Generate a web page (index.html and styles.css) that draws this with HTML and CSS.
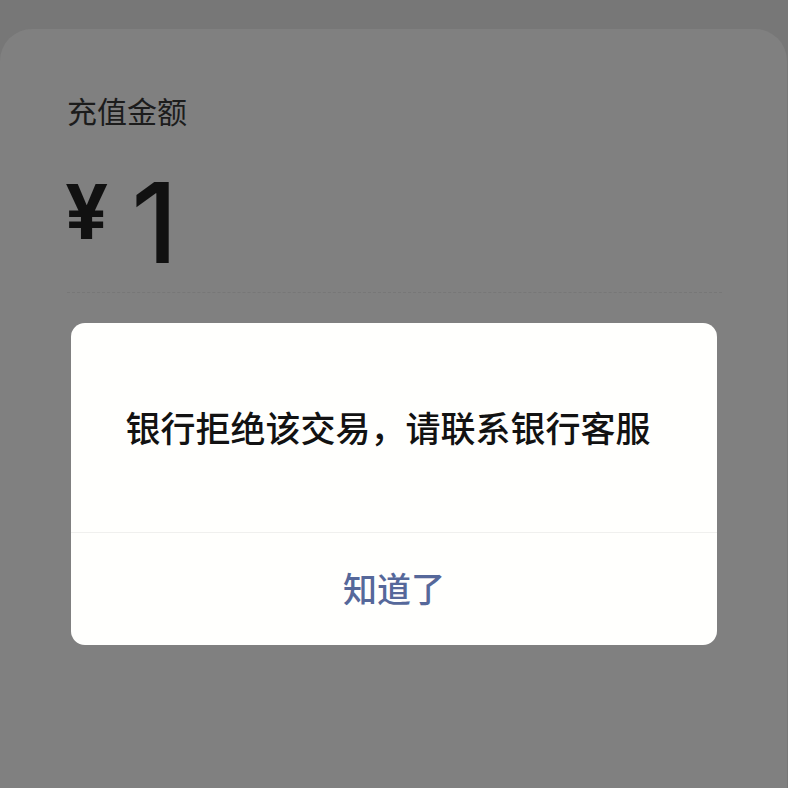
FILE: index.html
```html
<!DOCTYPE html>
<html lang="zh-CN">
<head>
    <meta charset="UTF-8">
    <meta name="viewport" content="width=device-width, initial-scale=1.0">
    <title>充值</title>
    <link rel="stylesheet" href="styles.css">
</head>
<body>

    <div class="page">
        <div class="card">
            <div class="label">充值金额</div>
            <div class="amount">
                <span class="yen">¥</span>
                <span class="num">1</span>
            </div>
            <div class="line"></div>
        </div>
    </div>

    <div class="dialog">
        <div class="dialog-msg">银行拒绝该交易，请联系银行客服</div>
        <div class="dialog-btn">知道了</div>
    </div>

</body>
</html>
```

FILE: styles.css
```css
body {
    margin: 0;
    background-color: #777777;
    font-family: "Noto Sans CJK SC", "Noto Sans", sans-serif;
    height: 788px;
    overflow: hidden;
}
.page {
    padding-top: 29px;
    height: 759px;
}
.card {
    height: 100%;
    margin: 0 1px 0 0;
    background-color: #808080;
    border-top-left-radius: 32px;
    border-top-right-radius: 32px;
    padding: 64px 67px 0 67px;
    box-sizing: border-box;
}
.label {
    font-size: 30px;
    line-height: 34px;
    color: #1c1c1c;
}
.amount {
    display: flex;
    align-items: flex-start;
    margin-top: 48px;
    height: 105px;
    font-family: Inter, "Liberation Sans", sans-serif;
    color: #111111;
}
.yen {
    font-size: 76px;
    font-weight: 700;
    line-height: 1;
    margin-top: -2px;
    margin-left: -2px;
}
.num {
    font-size: 112px;
    font-weight: 500;
    line-height: 1;
    margin-left: 23px;
    margin-top: -9px;
}
.line {
    margin-top: 12px;
    border-top: 1px dashed #777777;
    margin-right: -2px;
}

.dialog {
    position: absolute;
    top: 323px;
    left: 71px;
    width: 646px;
    height: 322px;
    background-color: #fffffd;
    border-radius: 14px;
    display: flex;
    flex-direction: column;
    overflow: hidden;
}
.dialog-msg {
    height: 209px;
    display: flex;
    align-items: center;
    justify-content: center;
    font-size: 35px;
    font-weight: 500;
    color: #121212;
    padding-right: 12px;
    padding-bottom: 2px;
    box-sizing: border-box;
}
.dialog-btn {
    flex: 1;
    border-top: 1px solid #f0f0ee;
    display: flex;
    align-items: center;
    justify-content: center;
    font-size: 34px;
    font-weight: 500;
    color: #56689a;
    padding-bottom: 3px;
}
```
